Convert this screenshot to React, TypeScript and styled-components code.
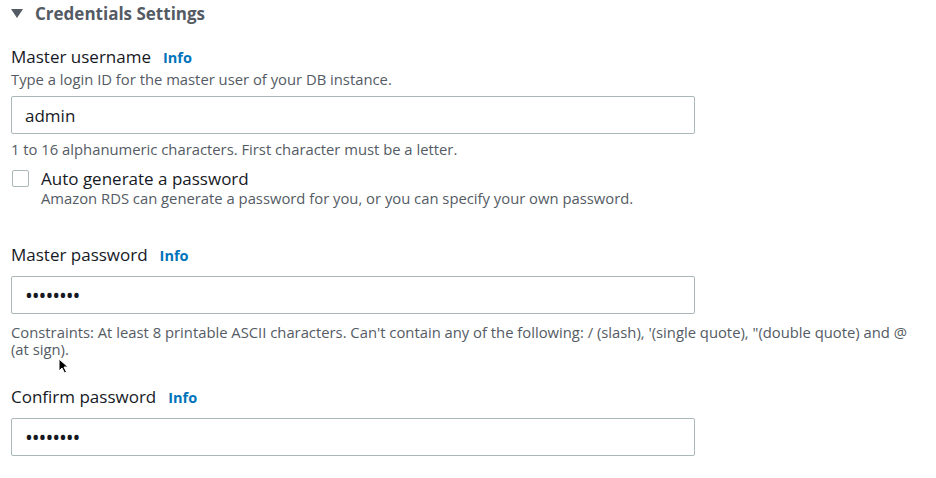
import React from "react";
import styled, { createGlobalStyle } from "styled-components";

const Global = createGlobalStyle`
  html, body { margin: 0; padding: 0; background: #fff; }
  body { font-family: "Open Sans", "Liberation Sans", sans-serif; color: #16191f; }
`;

const Page = styled.div`
  width: 936px;
  height: 478px;
  overflow: hidden;
  position: relative;
  padding: 0 11px;
  box-sizing: border-box;
`;

const Header = styled.div`
  display: flex;
  align-items: center;
  gap: 12px;
  height: 26px;
  color: #545b64;
  font-weight: 700;
  font-size: 17px;
`;

const Caret = styled.span`
  width: 0;
  height: 0;
  border-left: 6px solid transparent;
  border-right: 6px solid transparent;
  border-top: 9px solid #545b64;
`;

const Field = styled.div<{ $top: number }>`
  margin-top: ${(p) => p.$top}px;
  display: flex;
  flex-direction: column;
`;

const Label = styled.div`
  display: flex;
  align-items: baseline;
  gap: 12px;
  font-size: 17px;
  line-height: 22px;
  color: #16191f;
`;

const Info = styled.span`
  color: #0073bb;
  font-weight: 700;
  font-size: 14.5px;
`;

const Desc = styled.div<{ $mt?: number }>`
  margin-top: ${(p) => p.$mt ?? 0}px;
  font-size: 14.8px;
  line-height: 17px;
  color: #545b64;
  padding-right: 4px;
`;

const Input = styled.div<{ $mt: number }>`
  margin-top: ${(p) => p.$mt}px;
  width: 684px;
  height: 38px;
  box-sizing: border-box;
  border: 1px solid #aab7b8;
  border-radius: 2px;
  display: flex;
  align-items: center;
  padding-left: 13px;
  font-size: 17px;
  color: #16191f;
`;

const Dots = styled.span`
  font-size: 21px;
  letter-spacing: -1.1px;
  color: #16191f;
`;

const CheckRow = styled.div`
  display: flex;
  gap: 12px;
  margin-top: 10px;
`;

const Box = styled.div`
  width: 17px;
  height: 17px;
  box-sizing: border-box;
  border: 1px solid #aab7b8;
  border-radius: 2px;
  margin-top: 2px;
  margin-left: 1px;
`;

const CheckText = styled.div`
  display: flex;
  flex-direction: column;
`;

const Cursor = styled.svg`
  position: absolute;
  left: 58px;
  top: 358px;
`;

export default function App() {
  return (
    <Page>
      <Global />
      <Header>
        <Caret />
        <span>Credentials Settings</span>
      </Header>
      <Field $top={20}>
        <Label>
          <span>Master username</span>
          <Info>Info</Info>
        </Label>
        <Desc $mt={2}>Type a login ID for the master user of your DB instance.</Desc>
        <Input $mt={8}>admin</Input>
        <Desc $mt={7}>1 to 16 alphanumeric characters. First character must be a letter.</Desc>
        <CheckRow>
          <Box />
          <CheckText>
            <Label>Auto generate a password</Label>
            <Desc>Amazon RDS can generate a password for you, or you can specify your own password.</Desc>
          </CheckText>
        </CheckRow>
      </Field>
      <Field $top={37}>
        <Label>
          <span>Master password</span>
          <Info>Info</Info>
        </Label>
        <Input $mt={9}>
          <Dots>••••••••</Dots>
        </Input>
        <Desc $mt={10}>
          Constraints: At least 8 printable ASCII characters. Can't contain any of the following: / (slash), '(single quote), "(double quote) and @ (at sign).
        </Desc>
      </Field>
      <Field $top={28}>
        <Label>
          <span>Confirm password</span>
          <Info>Info</Info>
        </Label>
        <Input $mt={9}>
          <Dots>••••••••</Dots>
        </Input>
      </Field>
      <Cursor width="12" height="16" viewBox="0 0 12 16">
        <path d="M1 1 L1 13 L4 10 L6.5 15 L8.5 14 L6 9 L10 9 Z" fill="#000" stroke="#fff" strokeWidth="1" />
      </Cursor>
    </Page>
  );
}
